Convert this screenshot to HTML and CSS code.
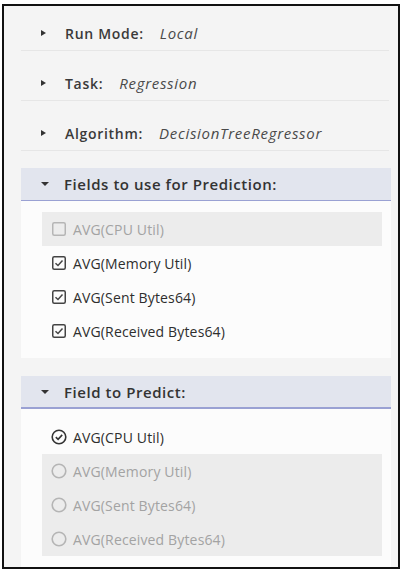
FILE: index.html
```html
<!DOCTYPE html>
<html>
<head>
<meta charset="utf-8">
<link rel="stylesheet" href="styles.css">
</head>
<body>
<div class="frame">
  <div class="summary">
    <div class="row"><span class="arrow-r"></span><span class="label">Run Mode:</span><span class="value">Local</span></div>
    <div class="row"><span class="arrow-r"></span><span class="label">Task:</span><span class="value">Regression</span></div>
    <div class="row"><span class="arrow-r"></span><span class="label">Algorithm:</span><span class="value">DecisionTreeRegressor</span></div>
  </div>

  <section class="group">
    <div class="group-head"><span class="arrow-d"></span>Fields to use for Prediction:</div>
    <div class="group-body">
      <div class="opt disabled">
        <svg class="box" viewBox="0 0 14 14"><rect x="0.75" y="0.75" width="12.5" height="12.5" rx="1.5"/></svg>
        <span>AVG(CPU Util)</span>
      </div>
      <div class="opt">
        <svg class="box" viewBox="0 0 14 14"><rect x="0.75" y="0.75" width="12.5" height="12.5" rx="1.5"/><path d="M3.5 7.2 L6 9.5 L10.5 4.5"/></svg>
        <span>AVG(Memory Util)</span>
      </div>
      <div class="opt">
        <svg class="box" viewBox="0 0 14 14"><rect x="0.75" y="0.75" width="12.5" height="12.5" rx="1.5"/><path d="M3.5 7.2 L6 9.5 L10.5 4.5"/></svg>
        <span>AVG(Sent Bytes64)</span>
      </div>
      <div class="opt">
        <svg class="box" viewBox="0 0 14 14"><rect x="0.75" y="0.75" width="12.5" height="12.5" rx="1.5"/><path d="M3.5 7.2 L6 9.5 L10.5 4.5"/></svg>
        <span>AVG(Received Bytes64)</span>
      </div>
    </div>
  </section>

  <section class="group last">
    <div class="group-head thick"><span class="arrow-d"></span>Field to Predict:</div>
    <div class="group-body">
      <div class="opt">
        <svg class="radio" viewBox="0 0 16 16"><circle cx="8" cy="8" r="6.8"/><path d="M4.8 8.2 L7.1 10.4 L11.2 5.9"/></svg>
        <span>AVG(CPU Util)</span>
      </div>
      <div class="opt disabled">
        <svg class="radio" viewBox="0 0 16 16"><circle cx="8" cy="8" r="6.8"/></svg>
        <span>AVG(Memory Util)</span>
      </div>
      <div class="opt disabled">
        <svg class="radio" viewBox="0 0 16 16"><circle cx="8" cy="8" r="6.8"/></svg>
        <span>AVG(Sent Bytes64)</span>
      </div>
      <div class="opt disabled">
        <svg class="radio" viewBox="0 0 16 16"><circle cx="8" cy="8" r="6.8"/></svg>
        <span>AVG(Received Bytes64)</span>
      </div>
    </div>
  </section>
</div>
</body>
</html>
```

FILE: styles.css
```css
html, body {
  margin: 0;
  padding: 0;
  background: #ffffff;
}

body {
  font-family: "Open Sans", "DejaVu Sans", sans-serif;
  font-size: 14px;
  color: #333;
}

.frame {
  box-sizing: border-box;
  margin: 4px 0 0 2px;
  width: 398px;
  height: 565px;
  border: 2px solid #111;
  background: #f4f4f4;
  padding: 18px 7px 0 17px;
  display: flex;
  flex-direction: column;
  overflow: hidden;
}

.summary {
  display: flex;
  flex-direction: column;
  gap: 23px;
  margin-right: 2px;
}

.row {
  display: flex;
  align-items: center;
  height: 18px;
  padding: 0 0 8px 20px;
  border-bottom: 1px solid #e6e6e6;
}

.arrow-r {
  width: 0;
  height: 0;
  border-top: 3.5px solid transparent;
  border-bottom: 3.5px solid transparent;
  border-left: 5px solid #333;
  margin-right: 19px;
}

.label {
  font-weight: 600;
  color: #3a3a3a;
  letter-spacing: 0.7px;
}

.value {
  font-size: 15px;
  font-style: italic;
  color: #4a4a4a;
  margin-left: 16px;
  letter-spacing: 0.7px;
}

.group {
  margin-top: 17px;
  display: flex;
  flex-direction: column;
}

.group + .group {
  margin-top: 18px;
}

.group.last {
  flex: 1;
}

.group-head {
  display: flex;
  align-items: center;
  height: 32px;
  padding-left: 20px;
  background: #e2e5ee;
  border-bottom: 1px solid #9aa1d3;
  font-size: 15px;
  font-weight: 600;
  color: #333;
  letter-spacing: 0.55px;
}

.group-head.thick {
  height: 31px;
  border-bottom-width: 2px;
}

.arrow-d {
  width: 0;
  height: 0;
  border-left: 4px solid transparent;
  border-right: 4px solid transparent;
  border-top: 4px solid #333;
  margin-right: 15px;
}

.group-body {
  background: #fcfcfc;
  padding: 11px 9px 10px 21px;
  display: flex;
  flex-direction: column;
}

.group.last .group-body {
  flex: 1;
}

.opt {
  display: flex;
  align-items: center;
  height: 34px;
  padding-left: 10px;
  letter-spacing: 0.15px;
  color: #2e2e2e;
}

.opt span {
  margin-left: 7px;
}

.opt.disabled {
  background: #ececec;
  color: #a3a3a3;
}

.box {
  width: 14px;
  height: 14px;
  fill: none;
  stroke: #444;
  stroke-width: 1.5;
  flex: none;
}

.radio {
  width: 16px;
  height: 16px;
  fill: none;
  stroke: #333;
  stroke-width: 1.6;
  flex: none;
  margin-left: -1px;
  margin-right: -1px;
}

.opt.disabled .box,
.opt.disabled .radio {
  stroke: #b5b5b5;
}
```
